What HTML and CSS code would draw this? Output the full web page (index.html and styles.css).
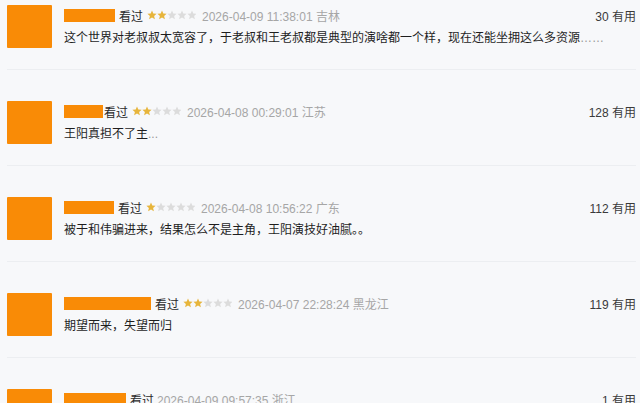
FILE: index.html
```html
<!DOCTYPE html>
<html lang="zh">
<head>
<meta charset="utf-8">
<link rel="stylesheet" href="styles.css">
</head>
<body>
<svg class="defs" width="0" height="0" aria-hidden="true">
  <defs>
    <polygon id="star" points="5,0.4 6.3,3.5 9.6,3.7 7.1,5.9 7.9,9.3 5,7.5 2.1,9.3 2.9,5.9 0.4,3.7 3.7,3.5"/>
  </defs>
</svg>
<div class="list">
  <div class="review">
    <div class="main">
      <div class="avatar"></div>
      <div class="content">
        <div class="head">
          <span class="name" style="width:51px"></span>
          <span class="seen">看过</span>
          <svg class="stars" width="49" height="10" viewBox="0 0 49 10"><use href="#star" x="0" class="on"/><use href="#star" x="10" class="on"/><use href="#star" x="20" class="off"/><use href="#star" x="30" class="off"/><use href="#star" x="40" class="off"/></svg>
          <span class="time">2026-04-09 11:38:01 吉林</span>
          <span class="useful">30 有用</span>
        </div>
        <p class="text">这个世界对老叔叔太宽容了，于老叔和王老叔都是典型的演啥都一个样，现在还能坐拥这么多资源<span class="dots">……</span></p>
      </div>
    </div>
  </div>
  <div class="review">
    <div class="main">
      <div class="avatar"></div>
      <div class="content">
        <div class="head">
          <span class="name" style="width:39px"></span>
          <span class="seen tight">看过</span>
          <svg class="stars" width="49" height="10" viewBox="0 0 49 10"><use href="#star" x="0" class="on"/><use href="#star" x="10" class="on"/><use href="#star" x="20" class="off"/><use href="#star" x="30" class="off"/><use href="#star" x="40" class="off"/></svg>
          <span class="time">2026-04-08 00:29:01 江苏</span>
          <span class="useful">128 有用</span>
        </div>
        <p class="text">王阳真担不了主<span class="dots">...</span></p>
      </div>
    </div>
  </div>
  <div class="review">
    <div class="main">
      <div class="avatar"></div>
      <div class="content">
        <div class="head">
          <span class="name" style="width:50px"></span>
          <span class="seen">看过</span>
          <svg class="stars" width="49" height="10" viewBox="0 0 49 10"><use href="#star" x="0" class="on"/><use href="#star" x="10" class="off"/><use href="#star" x="20" class="off"/><use href="#star" x="30" class="off"/><use href="#star" x="40" class="off"/></svg>
          <span class="time">2026-04-08 10:56:22 广东</span>
          <span class="useful">112 有用</span>
        </div>
        <p class="text">被于和伟骗进来，结果怎么不是主角，王阳演技好油腻。。</p>
      </div>
    </div>
  </div>
  <div class="review">
    <div class="main">
      <div class="avatar"></div>
      <div class="content">
        <div class="head">
          <span class="name" style="width:87px"></span>
          <span class="seen">看过</span>
          <svg class="stars" width="49" height="10" viewBox="0 0 49 10"><use href="#star" x="0" class="on"/><use href="#star" x="10" class="on"/><use href="#star" x="20" class="off"/><use href="#star" x="30" class="off"/><use href="#star" x="40" class="off"/></svg>
          <span class="time">2026-04-07 22:28:24 黑龙江</span>
          <span class="useful">119 有用</span>
        </div>
        <p class="text">期望而来，失望而归</p>
      </div>
    </div>
  </div>
  <div class="review">
    <div class="main">
      <div class="avatar"></div>
      <div class="content">
        <div class="head">
          <span class="name" style="width:62px"></span>
          <span class="seen">看过</span>
          <span class="time">2026-04-09 09:57:35 浙江</span>
          <span class="useful">1 有用</span>
        </div>
        <p class="text"></p>
      </div>
    </div>
  </div>
</div>
</body>
</html>
```
FILE: styles.css
```css
html, body {
  margin: 0;
  padding: 0;
}
body {
  width: 640px;
  height: 403px;
  overflow: hidden;
  background: #f7f8fa;
  font-family: "Liberation Sans", "Noto Sans CJK SC", sans-serif;
  color: #222;
}
.defs {
  position: absolute;
}
.list {
  display: flex;
  flex-direction: column;
}
.review {
  height: 96px;
  padding-top: 5px;
  box-sizing: border-box;
  flex: none;
}
.main {
  display: flex;
  gap: 12px;
  height: 65px;
  margin: 0 4px 0 7px;
  border-bottom: 1px solid #eceef1;
  box-sizing: border-box;
}
.avatar {
  width: 45px;
  height: 43px;
  background: #f98b06;
  border-radius: 1px;
  flex: none;
}
.content {
  flex: 1;
  padding-top: 2px;
  min-width: 0;
}
.head {
  display: flex;
  align-items: center;
  height: 16px;
  font-size: 12px;
  white-space: nowrap;
}
.name {
  display: block;
  height: 13px;
  background: #f98b06;
  flex: none;
}
.seen {
  margin-left: 4px;
  color: #2a2a2a;
}
.seen.tight {
  margin-left: 1px;
}
.stars {
  margin-left: 4px;
  flex: none;
}
.stars .on {
  fill: #e7b53b;
}
.stars .off {
  fill: #dcdcdc;
}
.time {
  margin-left: 6px;
  font-size: 12px;
  color: #a6a6a6;
}
.seen + .time {
  margin-left: 3px;
}
.useful {
  margin-left: auto;
  color: #3a3a3a;
  font-size: 12px;
}
.text {
  margin: 8px 0 0;
  font-size: 12px;
  line-height: 14px;
  color: #1e1e1e;
  white-space: nowrap;
}
.dots {
  color: #999;
}
```
